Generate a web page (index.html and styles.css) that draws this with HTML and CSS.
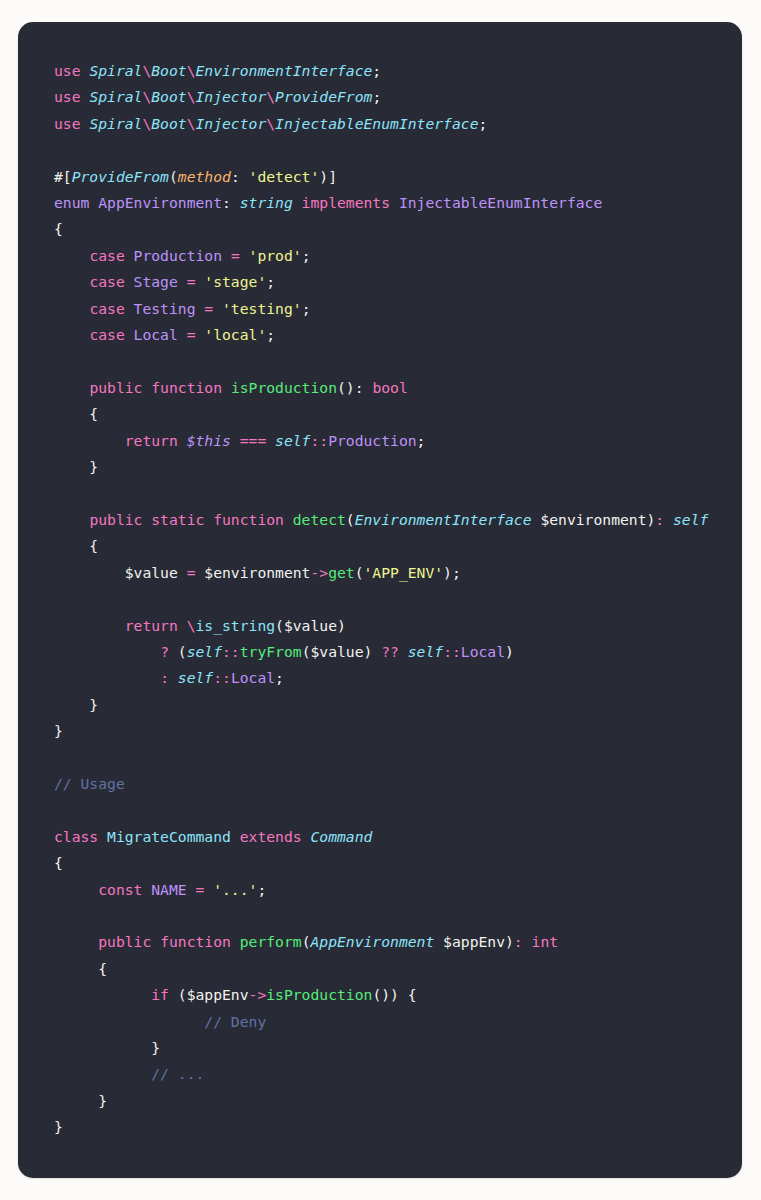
FILE: index.html
```html
<!DOCTYPE html>
<html lang="en">
<head>
<meta charset="utf-8">
<title>AppEnvironment</title>
<link rel="stylesheet" href="styles.css">
</head>
<body>
<main class="card">
<pre class="code"><code><span class="k">use</span> <span class="ci">Spiral</span><span class="k">\</span><span class="ci">Boot</span><span class="k">\</span><span class="ci">EnvironmentInterface</span>;
<span class="k">use</span> <span class="ci">Spiral</span><span class="k">\</span><span class="ci">Boot</span><span class="k">\</span><span class="ci">Injector</span><span class="k">\</span><span class="ci">ProvideFrom</span>;
<span class="k">use</span> <span class="ci">Spiral</span><span class="k">\</span><span class="ci">Boot</span><span class="k">\</span><span class="ci">Injector</span><span class="k">\</span><span class="ci">InjectableEnumInterface</span>;

#[<span class="ci">ProvideFrom</span>(<span class="o">method</span>: <span class="y">'detect'</span>)]
<span class="p">enum</span> <span class="p">AppEnvironment</span>: <span class="ci">string</span> <span class="k">implements</span> <span class="p">InjectableEnumInterface</span>
{
    <span class="k">case</span> <span class="p">Production</span> <span class="k">=</span> <span class="y">'prod'</span>;
    <span class="k">case</span> <span class="p">Stage</span> <span class="k">=</span> <span class="y">'stage'</span>;
    <span class="k">case</span> <span class="p">Testing</span> <span class="k">=</span> <span class="y">'testing'</span>;
    <span class="k">case</span> <span class="p">Local</span> <span class="k">=</span> <span class="y">'local'</span>;

    <span class="k">public</span> <span class="k">function</span> <span class="g">isProduction</span>(): <span class="k">bool</span>
    {
        <span class="k">return</span> <span class="pi">$this</span> <span class="k">===</span> <span class="ci">self</span><span class="k">::</span><span class="p">Production</span>;
    }

    <span class="k">public</span> <span class="k">static</span> <span class="k">function</span> <span class="g">detect</span>(<span class="ci">EnvironmentInterface</span> $environment)<span class="k">:</span> <span class="ci">self</span>
    {
        $value <span class="k">=</span> $environment<span class="k">-&gt;</span><span class="g">get</span>(<span class="y">'APP_ENV'</span>);

        <span class="k">return</span> <span class="k">\</span><span class="c">is_string</span>($value)
            <span class="k">?</span> (<span class="ci">self</span><span class="k">::</span><span class="g">tryFrom</span>($value) <span class="k">??</span> <span class="ci">self</span><span class="k">::</span><span class="p">Local</span>)
            <span class="k">:</span> <span class="ci">self</span><span class="k">::</span><span class="p">Local</span>;
    }
}

<span class="cm">// Usage</span>

<span class="k">class</span> <span class="c">MigrateCommand</span> <span class="k">extends</span> <span class="ci">Command</span>
{
     <span class="k">const</span> <span class="p">NAME</span> <span class="k">=</span> <span class="y">'...'</span>;

     <span class="k">public</span> <span class="k">function</span> <span class="g">perform</span>(<span class="ci">AppEnvironment</span> $appEnv)<span class="k">:</span> <span class="k">int</span>
     {
           <span class="k">if</span> ($appEnv<span class="k">-&gt;</span><span class="g">isProduction</span>()) {
                 <span class="cm">// Deny</span>
           }
           <span class="cm">// ...</span>
     }
}</code></pre>
</main>
</body>
</html>
```

FILE: styles.css
```css
html, body {
  margin: 0;
  padding: 0;
}

body {
  background: #fdfbf9;
  padding: 22px 19px 22px 18px;
}

.card {
  display: block;
  background: #282a36;
  border-radius: 15px;
  padding: 36px 36px 37px 36px;
  box-shadow: 0 1px 2px rgba(0, 0, 0, 0.12);
}

.code {
  margin: 0;
  font-family: "DejaVu Sans Mono", "Liberation Mono", monospace;
  font-size: 14.7px;
  line-height: 26.4px;
  color: #f3f3ee;
  white-space: pre;
  overflow: visible;
}

.code code {
  font-family: inherit;
}

.k { color: #f577c0; }
.c { color: #8be4f8; }
.ci { color: #8be4f8; font-style: italic; }
.g { color: #55ec79; }
.y { color: #eef58e; }
.p { color: #bd93f9; }
.pi { color: #bd93f9; font-style: italic; }
.o { color: #f9b46c; font-style: italic; }
.cm { color: #6272a4; }
```
